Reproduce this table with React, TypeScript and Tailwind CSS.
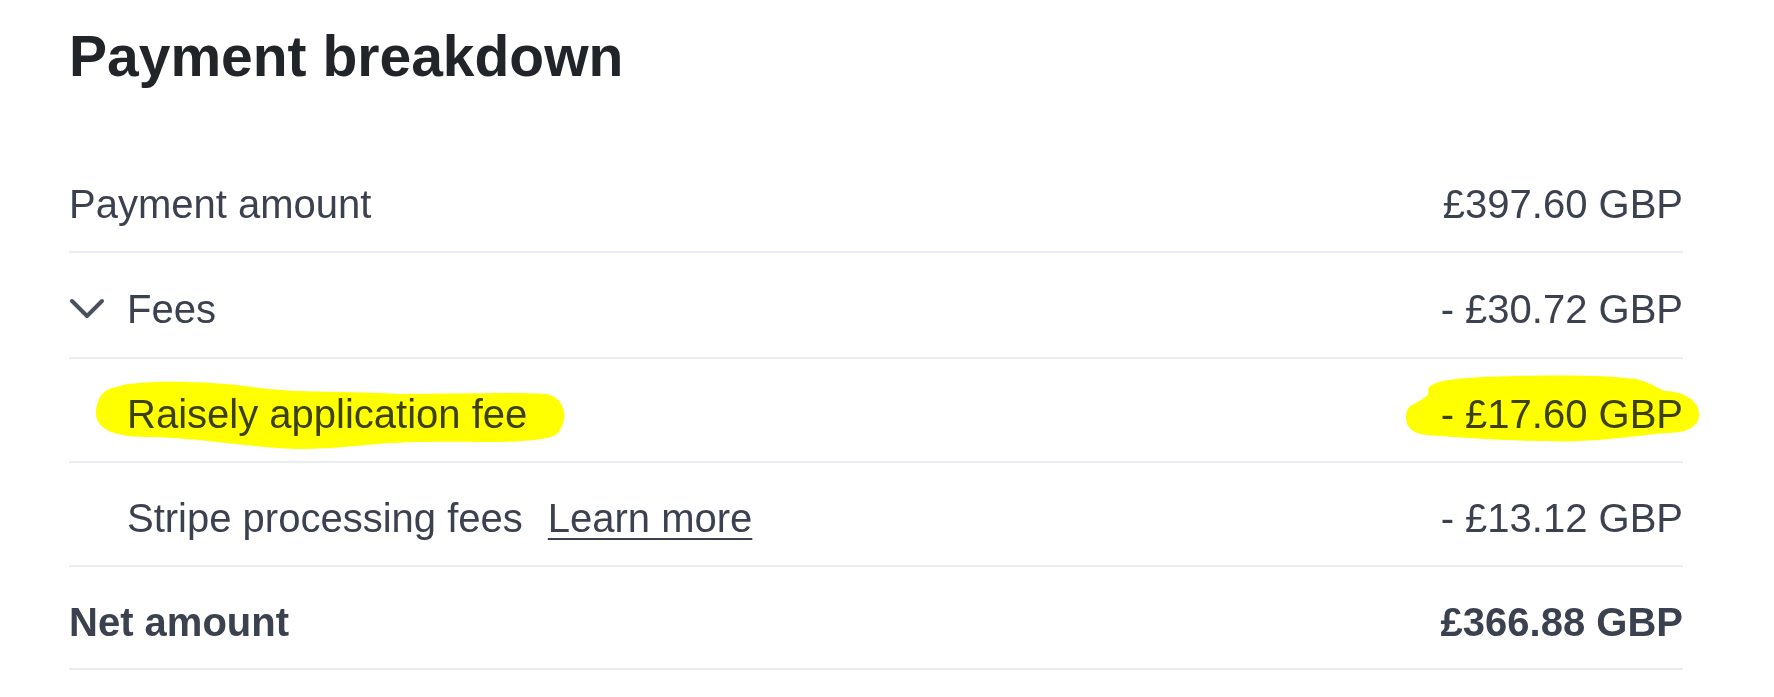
const rows = [
  { key: 'amount', label: 'Payment amount', value: '£397.60 GBP' },
  { key: 'fees', label: 'Fees', value: '- £30.72 GBP', toggle: true },
  { key: 'app', label: 'Raisely application fee', value: '- £17.60 GBP', indent: true, marked: true },
  { key: 'stripe', label: 'Stripe processing fees', value: '- £13.12 GBP', indent: true, link: 'Learn more' },
]

function Highlight({ className, d, w, h }: { className: string; d: string; w: number; h: number }) {
  return (
    <svg
      className={`pointer-events-none absolute mix-blend-multiply ${className}`}
      width={w}
      height={h}
      viewBox={`0 0 ${w} ${h}`}
    >
      <path d={d} fill="#ffff00" />
    </svg>
  )
}

export default function App() {
  return (
    <div className="min-h-[697px] bg-white pl-[69px] pr-[91px] font-['Liberation_Sans',Arial,sans-serif] text-[#3c4150]">
      <h2 className="pt-[28px] text-[57px] font-bold leading-none text-[#212529]">Payment breakdown</h2>

      <div className="mt-[64px]">
        {rows.map((row) => (
          <div
            key={row.key}
            className={`relative flex items-center justify-between border-b-2 border-[#e9ecf0] pt-2 text-[40px] leading-none ${
              row.toggle ? 'h-[106px]' : 'h-[104px]'
            }`}
          >
            <div className={`flex items-center ${row.indent ? 'pl-[58px]' : ''}`}>
              {row.toggle && (
                <svg className="mr-[22px]" width="36" height="22" viewBox="0 0 36 22">
                  <polyline
                    points="3,3 18,18 33,3"
                    fill="none"
                    stroke="#4b5060"
                    strokeWidth="4"
                    strokeLinecap="round"
                    strokeLinejoin="round"
                  />
                </svg>
              )}
              <span>{row.label}</span>
              {row.link && (
                <a className="ml-[25px] underline decoration-2 underline-offset-[6px]">{row.link}</a>
              )}
            </div>
            <span>{row.value}</span>

            {row.marked && (
              <>
                <Highlight
                  className="left-[25px] top-[20px]"
                  w={474}
                  h={72}
                  d="M22 8 C45 0 120 2 165 9 C205 14 255 12 305 15 C365 15 420 13 452 15 C472 18 476 42 462 56 C440 66 382 62 332 63 C282 63 252 70 202 70 C150 68 102 58 52 58 C20 58 0 50 2 31 C4 17 10 10 22 8 Z"
                />
                <Highlight
                  className="-right-[17px] top-[16px]"
                  w={294}
                  h={72}
                  d="M10 28 C20 22 24 20 22 14 C26 4 60 2 110 1 C160 0 200 0 230 4 C245 8 250 12 258 16 C275 16 292 24 293 38 C294 52 280 58 260 58 C220 62 180 68 140 66 C100 66 50 62 20 60 C4 58 0 50 0 42 C0 34 4 30 10 28 Z"
                />
              </>
            )}
          </div>
        ))}

        <div className="flex h-[103px] items-center justify-between border-b-2 border-[#e9ecf0] pt-2 text-[40px] font-bold leading-none">
          <span>Net amount</span>
          <span>£366.88 GBP</span>
        </div>
      </div>
    </div>
  )
}
